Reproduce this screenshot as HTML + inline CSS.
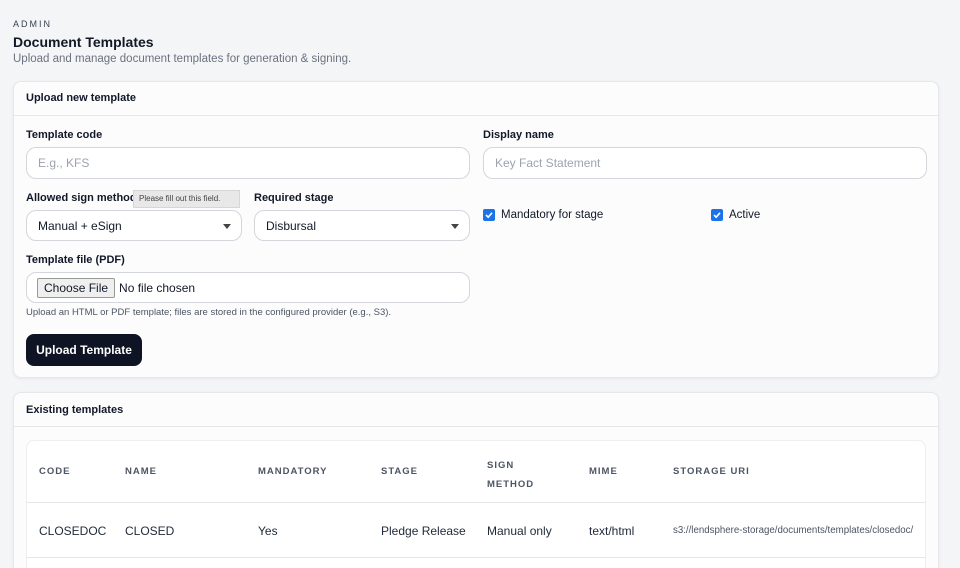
<!DOCTYPE html>
<html style="width:960px;height:568px;overflow:hidden"><head><meta charset="utf-8"><style>
*{box-sizing:border-box;margin:0;padding:0}
html,body{width:960px;height:568px;overflow:hidden}
body{background:#f4f5f7;font-family:"Liberation Sans",Arial,sans-serif;color:#111827;position:relative}
.a{position:absolute}
.card{position:absolute;background:#fcfcfd;border:1px solid #e6e7eb;border-radius:8px;box-shadow:0 1px 3px rgba(0,0,0,.06)}
.lbl{position:absolute;font-size:11px;font-weight:bold;color:#111827}
.inp{position:absolute;background:#fff;border:1px solid #d4d6dc;border-radius:10px;font-size:12px;display:flex;align-items:center;padding-left:11px}
.ph{color:#9ca3af}
.arrow{position:absolute;right:10px;top:13px;width:0;height:0;border-left:4px solid transparent;border-right:4px solid transparent;border-top:5px solid #444}
.cb{position:absolute;width:12px;height:12px;background:#1a73e8;border-radius:2px}
.cb svg{position:absolute;left:1px;top:1px}
.th{position:absolute;font-size:9.5px;letter-spacing:1px;color:#4b5563;font-weight:bold}
.td{position:absolute;font-size:12px;color:#1f2937}
</style></head><body>
<div class="a" style="left:13px;top:19px;font-size:9px;letter-spacing:2px;color:#374151">ADMIN</div>
<div class="a" style="left:13px;top:34px;font-size:14px;font-weight:bold">Document Templates</div>
<div class="a" style="left:13px;top:53px;font-size:11.5px;color:#6b7280">Upload and manage document templates for generation &amp; signing.</div>

<div class="card" style="left:13px;top:81px;width:926px;height:297px">
 <div class="a" style="left:0;top:33px;width:100%;height:1px;background:#e6e7eb"></div>
 <div class="a" style="left:12px;top:10px;font-size:11px;font-weight:bold">Upload new template</div>
</div>
<div class="lbl" style="left:26px;top:129px">Template code</div>
<div class="inp" style="left:26px;top:147px;width:444px;height:32px"><span class="ph">E.g., KFS</span></div>
<div class="lbl" style="left:483px;top:129px">Display name</div>
<div class="inp" style="left:483px;top:147px;width:444px;height:32px"><span class="ph">Key Fact Statement</span></div>

<div class="lbl" style="left:26px;top:192px">Allowed sign method</div>
<div class="a" style="left:133px;top:190px;width:107px;height:18px;background:#e8e8e8;border:1px solid #d6d6d6;font-size:8px;color:#444;padding:3px 5px">Please fill out this field.</div>
<div class="inp" style="left:26px;top:210px;width:216px;height:31px">Manual + eSign<div class="arrow"></div></div>
<div class="lbl" style="left:254px;top:192px">Required stage</div>
<div class="inp" style="left:254px;top:210px;width:216px;height:31px">Disbursal<div class="arrow"></div></div>

<div class="cb" style="left:483px;top:209px"><svg width="10" height="10" viewBox="0 0 10 10"><path d="M2 5 L4.2 7.2 L8 2.8" stroke="#fff" stroke-width="1.6" fill="none"/></svg></div>
<div class="a" style="left:501px;top:209px;font-size:11.5px">Mandatory for stage</div>
<div class="cb" style="left:711px;top:209px"><svg width="10" height="10" viewBox="0 0 10 10"><path d="M2 5 L4.2 7.2 L8 2.8" stroke="#fff" stroke-width="1.6" fill="none"/></svg></div>
<div class="a" style="left:729px;top:209px;font-size:11.5px">Active</div>

<div class="lbl" style="left:26px;top:254px">Template file (PDF)</div>
<div class="inp" style="left:26px;top:272px;width:444px;height:31px;padding-left:10px"><span style="border:1px solid #999;background:#efefef;border-radius:2px;padding:2px 6px;font-size:12px;margin-right:4px">Choose File</span>No file chosen</div>
<div class="a" style="left:26px;top:307px;font-size:9.5px;color:#4b5563">Upload an HTML or PDF template; files are stored in the configured provider (e.g., S3).</div>
<div class="a" style="left:26px;top:334px;width:116px;height:32px;background:#0f1424;border-radius:8px;color:#fff;font-size:12px;font-weight:bold;text-align:center;line-height:32px">Upload Template</div>

<div class="card" style="left:13px;top:392px;width:926px;height:200px">
 <div class="a" style="left:0;top:33px;width:100%;height:1px;background:#e6e7eb"></div>
 <div class="a" style="left:12px;top:11px;font-size:11px;font-weight:bold">Existing templates</div>
</div>
<div class="a" style="left:26px;top:440px;width:900px;height:140px;background:#fff;border:1px solid #eceef1;border-radius:8px"></div>
<div class="a" style="left:26px;top:502px;width:900px;height:1px;background:#e6e7eb"></div>
<div class="a" style="left:26px;top:557px;width:900px;height:1px;background:#e6e7eb"></div>
<div class="th" style="left:39px;top:466px">CODE</div>
<div class="th" style="left:125px;top:466px">NAME</div>
<div class="th" style="left:258px;top:466px">MANDATORY</div>
<div class="th" style="left:381px;top:466px">STAGE</div>
<div class="th" style="left:487px;top:456px;line-height:19px">SIGN<br>METHOD</div>
<div class="th" style="left:589px;top:466px">MIME</div>
<div class="th" style="left:673px;top:466px">STORAGE URI</div>
<div class="td" style="left:39px;top:524px">CLOSEDOC</div>
<div class="td" style="left:125px;top:524px">CLOSED</div>
<div class="td" style="left:258px;top:524px">Yes</div>
<div class="td" style="left:381px;top:524px">Pledge Release</div>
<div class="td" style="left:487px;top:524px">Manual only</div>
<div class="td" style="left:589px;top:524px">text/html</div>
<div class="td" style="left:673px;top:525px;font-size:9.7px;color:#4b5563;width:253px;overflow:hidden;white-space:nowrap">s3://lendsphere-storage/documents/templates/closedoc/</div>
</body></html>
